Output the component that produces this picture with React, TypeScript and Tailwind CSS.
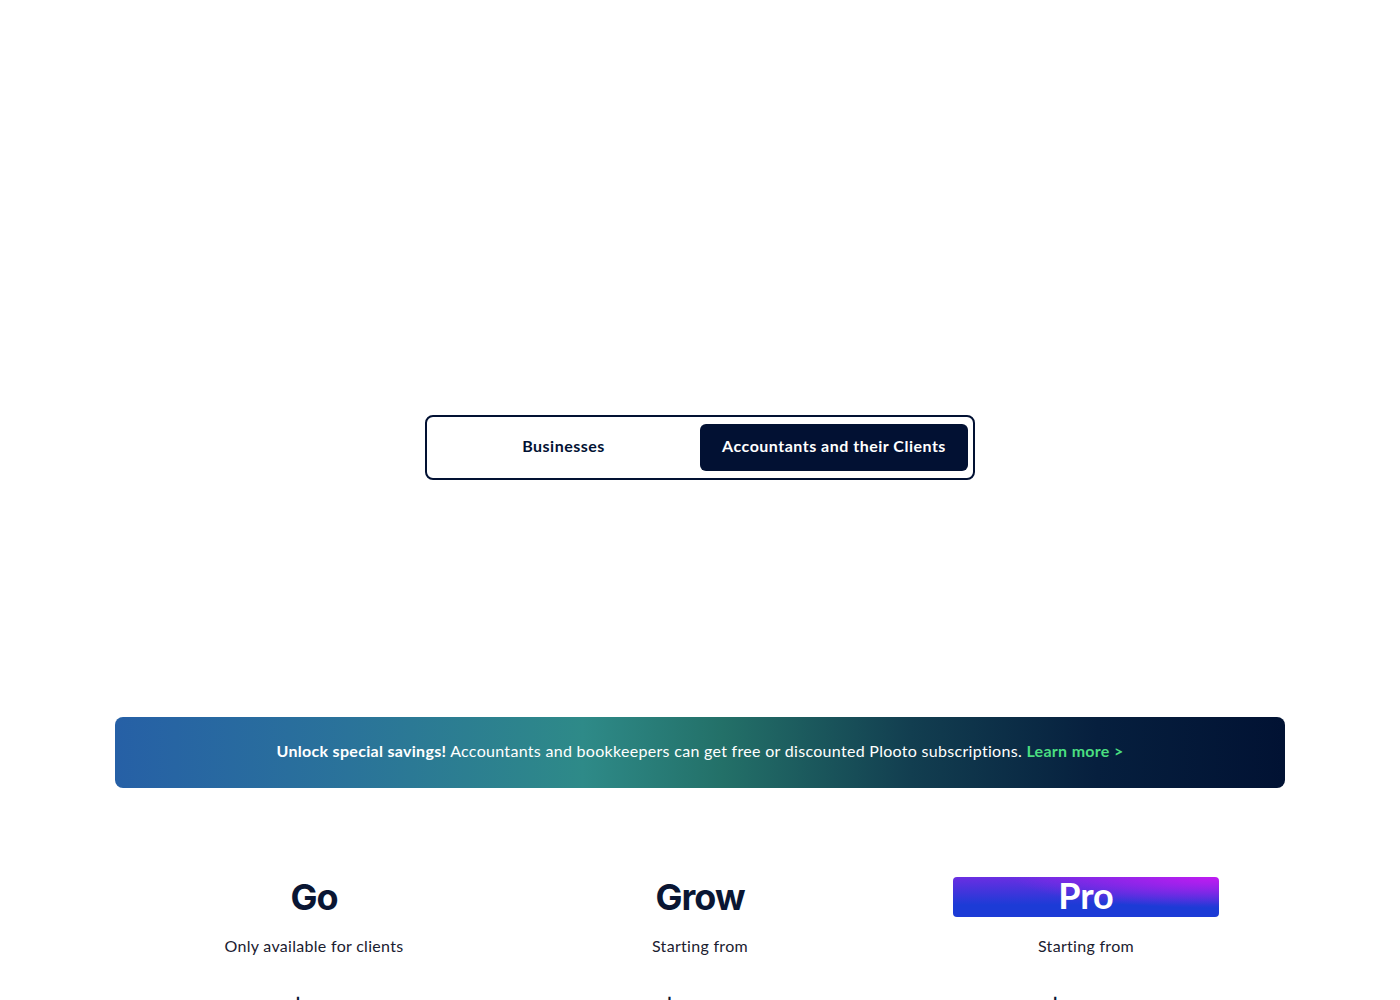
export default function App() {
  const plans = [
    { name: 'Go', sub: 'Only available for clients', price: '0' },
    { name: 'Grow', sub: 'Starting from', price: '32' },
    { name: 'Pro', sub: 'Starting from', price: '59' },
  ]

  return (
    <div className="min-h-screen bg-white font-['Lato','Noto_Sans',sans-serif] text-[#021133] overflow-hidden h-[1000px]">
      {/* audience toggle */}
      <div className="pt-[415px] flex justify-center">
        <div className="w-[550px] h-[65px] border-2 border-[#021133] rounded-lg flex items-stretch py-[7px] pr-[5px]">
          <button className="flex-1 pb-[4px] text-[16px] font-bold tracking-[0.5px] text-[#021133]">Businesses</button>
          <button className="w-[268px] pb-[4px] rounded-md bg-[#021133] text-white text-[16px] font-bold tracking-[0.5px]">
            Accountants and their Clients
          </button>
        </div>
      </div>

      {/* savings banner */}
      <div className="mt-[237px] mx-auto w-[1170px] h-[71px] rounded-lg flex items-center justify-center bg-[linear-gradient(90deg,#2660a6_0%,#2a739a_20%,#2e8a88_40%,#237068_52%,#123e50_68%,#061f3e_84%,#011233_100%)]">
        <p className="text-white text-[16px] tracking-[0.3px] -mt-[4px]">
          <span className="font-bold">Unlock special savings!</span>{' '}
          <span>Accountants and bookkeepers can get free or discounted Plooto subscriptions.</span>{' '}
          <a className="font-bold text-[#4ade80]">Learn more &gt;</a>
        </p>
      </div>

      {/* plans */}
      <div className="mt-[89px] mx-auto w-[1158px] grid grid-cols-3">
        {plans.map(p => (
          <div key={p.name} className="flex flex-col items-center">
            {p.name === 'Pro' ? (
              <div className="w-[266px] h-[40px] rounded-[4px] flex items-center justify-center bg-[radial-gradient(ellipse_at_top_right,rgba(196,26,242,0.95),transparent_55%),linear-gradient(to_bottom,#6a2ee2,#1c3bd6_70%)]">
                <span className="text-white text-[36px] font-bold leading-none -mt-[4px]">Pro</span>
              </div>
            ) : (
              <div className="h-[40px] flex items-center">
                <span className="text-[36px] font-bold leading-none tracking-[-1px] font-['Inter','Liberation_Sans',sans-serif] text-[#0a1633]">
                  {p.name}
                </span>
              </div>
            )}
            <p className="mt-[17px] text-[16px] tracking-[0.3px] text-[#1a2030]">{p.sub}</p>
            <div className="mt-[37px] flex items-start font-['Inter','Liberation_Sans',sans-serif] font-bold text-[#0a1633]">
              <span className="text-[36px] leading-none">$</span>
              <span className="mt-[16px] text-[48px] leading-none">{p.price}</span>
            </div>
          </div>
        ))}
      </div>
    </div>
  )
}
